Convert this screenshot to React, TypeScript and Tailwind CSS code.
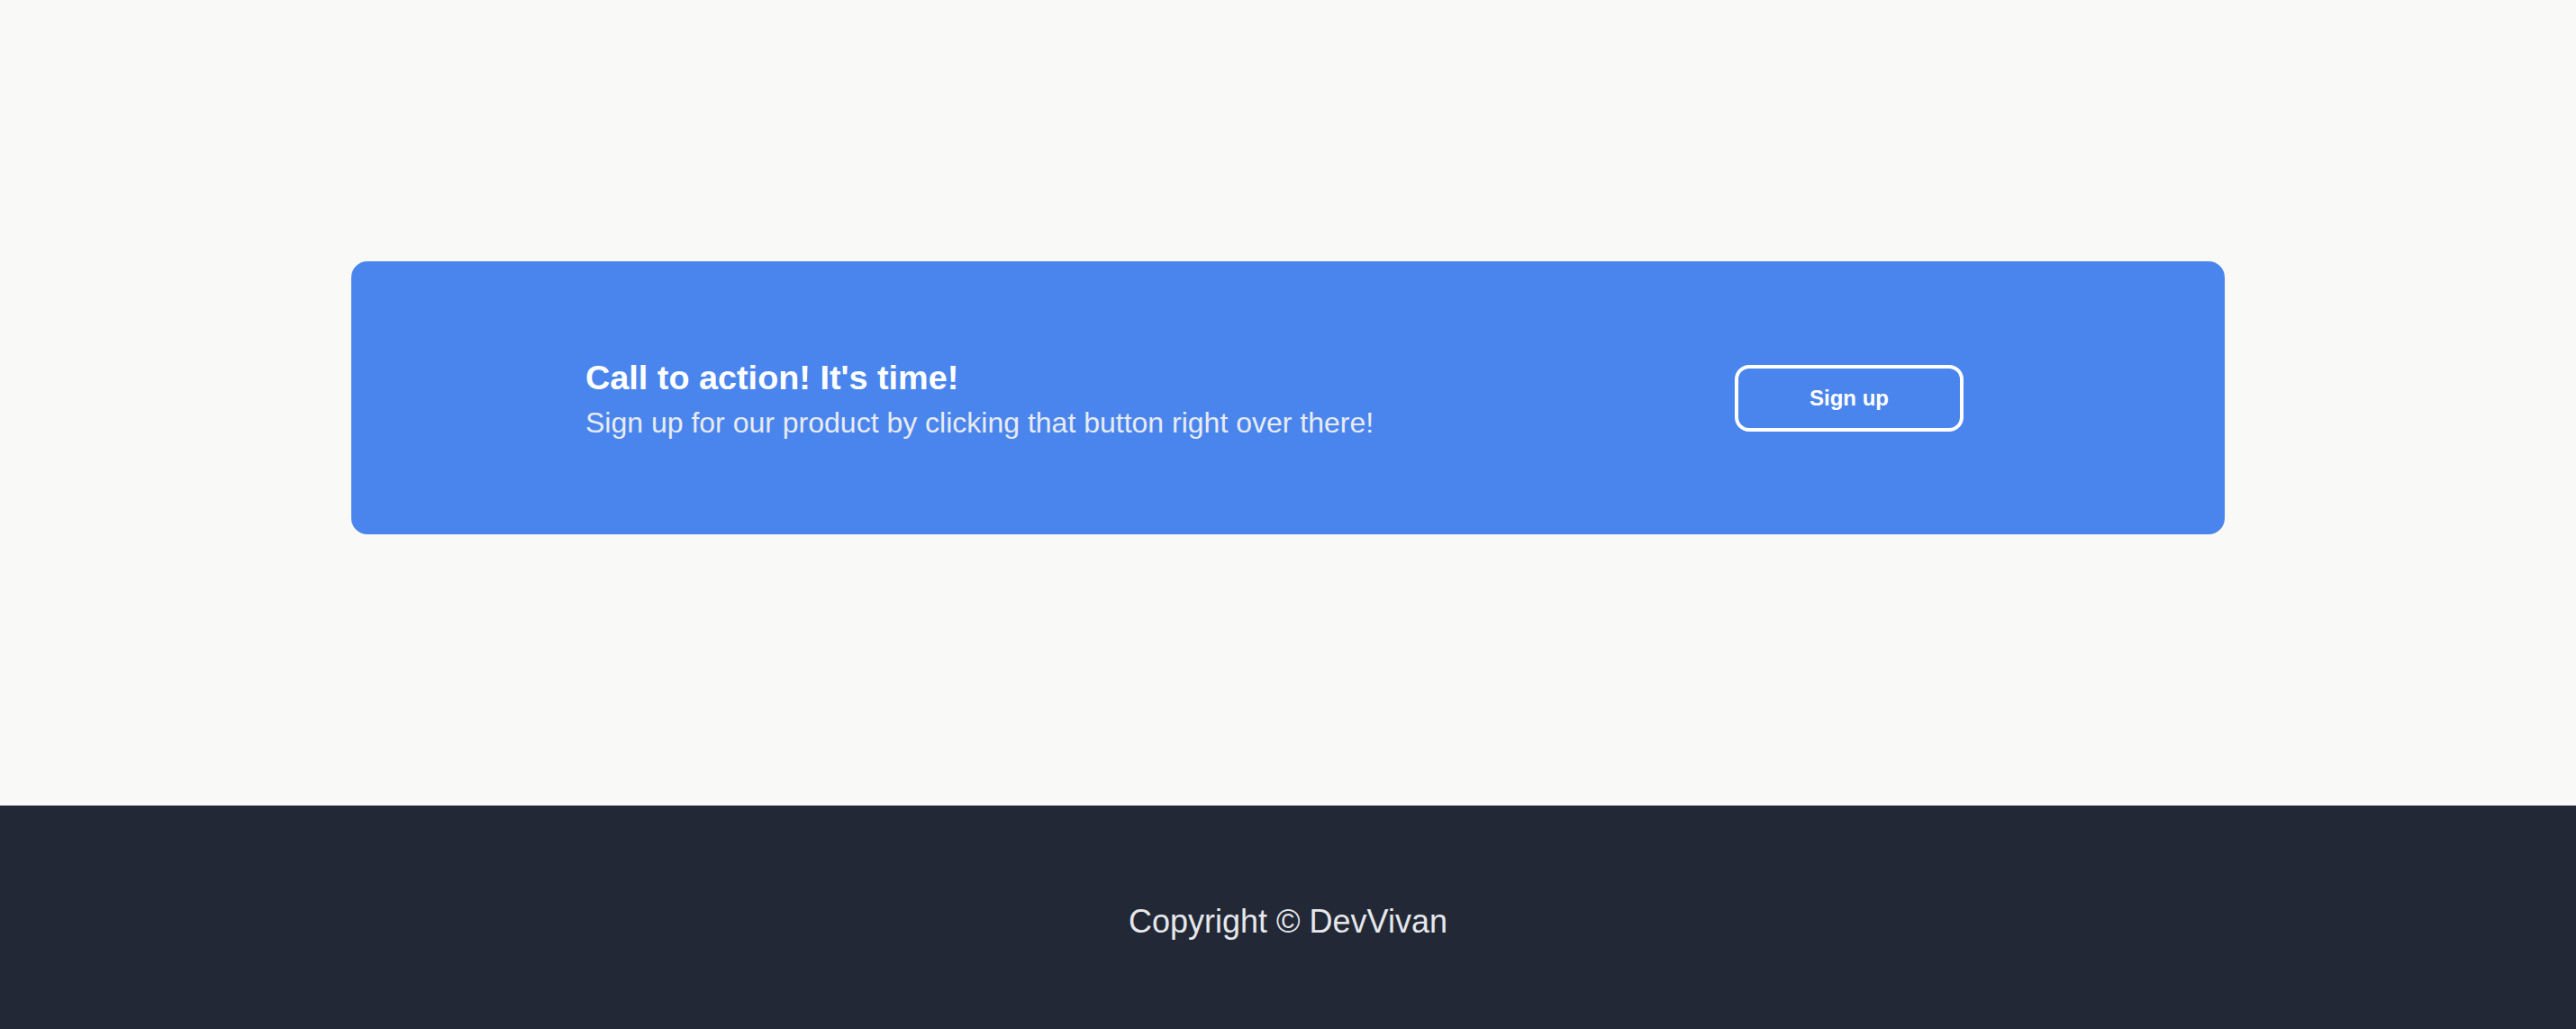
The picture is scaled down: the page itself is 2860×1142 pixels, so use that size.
import React from "react";

export default function App() {
  return (
    <div
      className="min-h-[1142px] flex flex-col bg-[#f9f9f7]"
      style={{ fontFamily: '"Liberation Sans", Arial, sans-serif' }}
    >
      <main className="h-[894px] pt-[290px] flex justify-center">
        <section className="w-[2080px] h-[303px] rounded-[18px] bg-[#4a85ed] flex items-center justify-between pl-[260px] pr-[290px]">
          <div className="flex flex-col mt-[4px]">
            <h2 className="text-[37.8px] leading-[48px] font-bold text-white">
              Call to action! It's time!
            </h2>
            <p className="mt-[2px] text-[32px] leading-[48px] text-[#e8ebf2]">
              Sign up for our product by clicking that button right over there!
            </p>
          </div>
          <button className="w-[254px] h-[74px] rounded-[16px] border-[4px] border-white text-white font-bold text-[24px] flex items-center justify-center">
            Sign up
          </button>
        </section>
      </main>
      <footer className="h-[248px] bg-[#222835] flex items-center justify-center">
        <p className="text-[36px] text-[#e5e7eb] mt-[9px]">Copyright © DevVivan</p>
      </footer>
    </div>
  );
}
